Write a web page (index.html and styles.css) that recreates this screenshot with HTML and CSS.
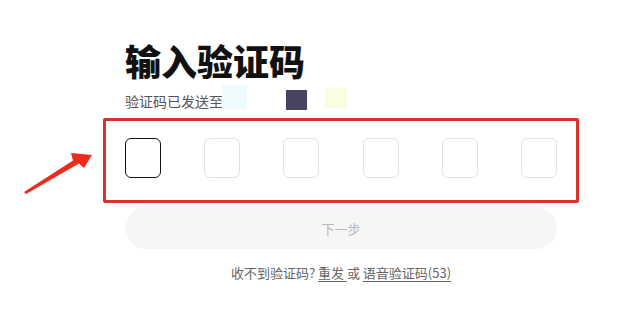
FILE: index.html
```html
<!DOCTYPE html>
<html lang="zh">
<head>
<meta charset="utf-8">
<link rel="stylesheet" href="styles.css">
</head>
<body>
<div class="page">
  <h1 class="title">输入验证码</h1>
  <div class="sub">
    <span class="sub-text">验证码已发送至</span>
    <span class="mask mask-cyan"></span>
    <span class="mask mask-purple"></span>
    <span class="mask mask-yellow"></span>
  </div>
  <div class="codes">
    <div class="code active"></div>
    <div class="code"></div>
    <div class="code"></div>
    <div class="code"></div>
    <div class="code"></div>
    <div class="code"></div>
  </div>
  <button class="next">下一步</button>
  <p class="help">收不到验证码? <a class="link">重发&nbsp;</a>或 <a class="link">语音验证码(53)</a></p>
</div>
<div class="highlight"></div>
<svg class="arrow" viewBox="20 148 75 50" width="75" height="50">
  <polygon points="24,192 73,160.5 71,153 92,155 84,168 79,163.5 26,194" fill="#ee2a1f"/>
</svg>
</body>
</html>
```
FILE: styles.css
```css
html, body {
  margin: 0;
  padding: 0;
  background: #ffffff;
}
body {
  width: 636px;
  height: 333px;
  position: relative;
  overflow: hidden;
  font-family: "Noto Sans CJK SC", "Noto Sans", sans-serif;
}
.page {
  padding: 39px 0 0 125px;
  width: 432px;
}
.title {
  margin: 0;
  font-size: 36px;
  line-height: 42px;
  font-weight: 900;
  color: #111;
  letter-spacing: 0;
}
.sub {
  display: flex;
  align-items: flex-start;
  margin-top: 10px;
  height: 20px;
}
.sub-text {
  font-size: 14px;
  line-height: 20px;
  color: #555;
}
.mask {
  display: block;
  flex: none;
}
.mask-cyan {
  width: 25px;
  height: 24px;
  margin-top: -6px;
  margin-left: -1px;
  background: #eefbfd;
}
.mask-purple {
  width: 21px;
  height: 20px;
  margin-top: -1px;
  margin-left: 39px;
  background: #4a4360;
}
.mask-yellow {
  width: 22px;
  height: 20px;
  margin-top: -3px;
  margin-left: 18px;
  background: #fbfde0;
}
.codes {
  display: flex;
  justify-content: space-between;
  margin-top: 27px;
}
.code {
  width: 36px;
  height: 40px;
  box-sizing: border-box;
  border: 1px solid #e2e2e2;
  border-radius: 6px;
}
.code.active {
  border: 1.5px solid #111;
}
.next {
  display: block;
  width: 432px;
  height: 42px;
  margin-top: 29px;
  border: none;
  border-radius: 21px;
  background: #f6f6f6;
  color: #b8b8b8;
  font-family: inherit;
  font-size: 13px;
  padding: 0;
}
.help {
  margin: 14px 0 0;
  text-align: center;
  font-size: 13px;
  line-height: 20px;
  color: #666;
}
.link {
  color: #666;
  text-decoration: underline;
  text-underline-offset: 3px;
}
.highlight {
  position: absolute;
  left: 103px;
  top: 118px;
  width: 476px;
  height: 85px;
  box-sizing: border-box;
  border: 3px solid #d8332b;
  border-radius: 2px;
}
.arrow {
  position: absolute;
  left: 20px;
  top: 148px;
}
```
